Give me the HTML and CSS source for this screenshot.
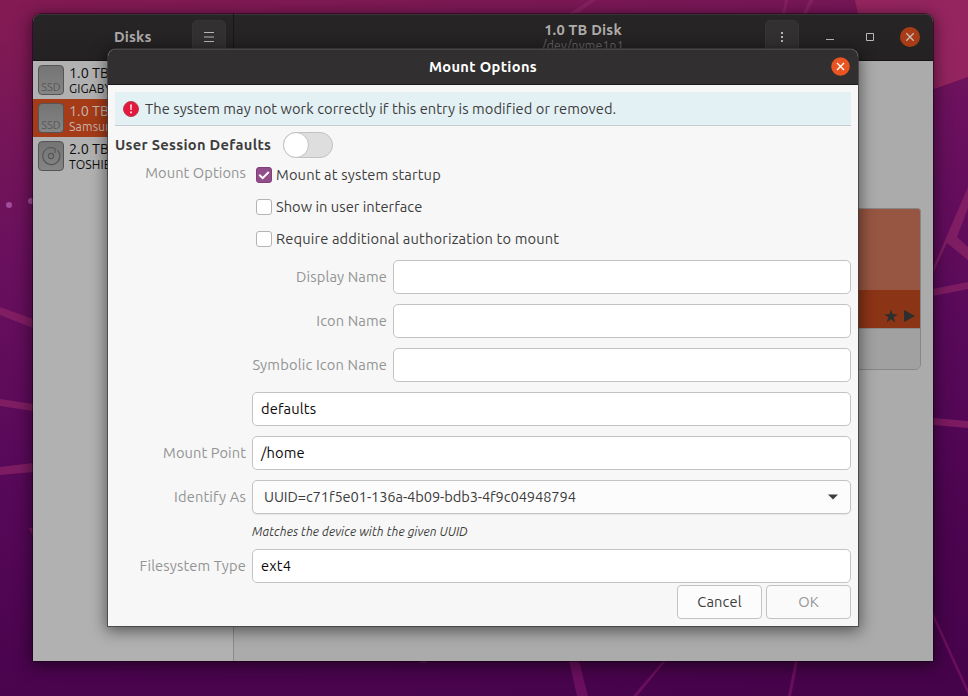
FILE: index.html
```html
<!DOCTYPE html>
<html lang="en">
<head>
<meta charset="utf-8">
<title>Mount Options</title>
<link rel="stylesheet" href="styles.css">
</head>
<body>
<svg class="wallpaper" width="968" height="696" viewBox="0 0 968 696" aria-hidden="true">
  <path d="M855 0L858 14L934 89L968 77V0Z" fill="#a02b62" opacity=".75"/>
  <g fill="#8c2467" opacity=".72">
    <path d="M568 14H577L596 0H590Z M782 14L785 0H788L785 14Z M803 14L809 0H814L806 14Z"/>
    <path d="M0 307L33 319V328L0 315Z M0 399L33 404V411L0 406Z M0 467L33 463V472L0 475Z M29 528H33V536Z"/>
    <path d="M968 187L933 268V273L947 243L968 260V247L957 237L968 208Z M933 289L968 282V289L933 296Z M933 418L968 421V428L933 425Z"/>
  </g>
  <g fill="#6a0f5e">
    <path d="M933 612L968 689V695L933 618Z M663 661H666L637 696H633Z M795 661H798L791 696H788Z M569 661H579L588 696H577Z M419 661H427V663H421Z"/>
  </g>
  <g fill="#a14d9a"><circle cx="9" cy="205" r="3"/><circle cx="31" cy="201" r="3"/></g>
</svg>

<main class="window">
  <header class="topbar">
    <div class="topbar-side">
      <span class="app-name">Disks</span>
      <span class="tool"><svg width="12" height="12" viewBox="0 0 12 12"><path d="M1 1.5H11M1 6H11M1 10.5H11" stroke="#b8b7b5"/></svg></span>
    </div>
    <div class="topbar-main">
      <div class="drive-title"><b>1.0 TB Disk</b><span>/dev/nvme1n1</span></div>
      <span class="tool"><svg width="12" height="12" viewBox="0 0 12 12"><path d="M5 1h2v2H5zM5 5h2v2H5zM5 9h2v2H5z" fill="#b8b7b5"/></svg></span>
      <div class="controls">
        <svg width="8" height="8" viewBox="0 0 8 8"><path d="M0 6.5H8" stroke="#b8b7b5"/></svg>
        <svg width="8" height="8" viewBox="0 0 8 8"><path d="M.5 .5H7.5V7.5H.5Z" fill="none" stroke="#b8b7b5"/></svg>
        <svg width="20" height="20" viewBox="0 0 20 20"><circle cx="10" cy="10" r="10" fill="#a73c17"/><path d="M6.3 6.3L13.7 13.7M13.7 6.3L6.3 13.7" stroke="#c8bfb9" stroke-width="1.3"/></svg>
      </div>
    </div>
  </header>
  <div class="content">
    <ul class="drives">
      <li class="drive"><span class="drive-icon">SSD</span><p><b>1.0 TB</b><span>GIGABY</span></p></li>
      <li class="drive active"><span class="drive-icon">SSD</span><p><b>1.0 TB</b><span>Samsun</span></p></li>
      <li class="drive"><span class="drive-icon"><svg width="20" height="20" viewBox="0 0 20 20" fill="none" stroke="#575757" stroke-width="1.2"><path d="M16.5 4.2A8.5 8.5 0 1 1 10 1.5A8 8 0 0 1 14 2.7V7"/><circle cx="10" cy="10" r="2.6"/></svg></span><p><b>2.0 TB</b><span>TOSHIB</span></p></li>
    </ul>
    <section class="volumes">
      <div class="volume-map">
        <div class="volume-free"></div>
        <div class="volume-used">
          <svg width="14" height="14" viewBox="0 0 14 14"><path d="M7 .3L8.7 5.2H13.8L9.7 8.3L11.2 13.4L7 10.3L2.8 13.4L4.3 8.3L.2 5.2H5.3Z" fill="#2e2e2e"/></svg>
          <svg width="11" height="12" viewBox="0 0 11 12"><path d="M0 0L11 6L0 12Z" fill="#2e2e2e"/></svg>
        </div>
        <div class="volume-tools"></div>
      </div>
    </section>
  </div>
</main>

<div class="dialog" role="dialog">
  <header class="dialog-head"><h1>Mount Options</h1>
    <svg class="dialog-close" width="19" height="19" viewBox="0 0 19 19"><circle cx="9.5" cy="9.5" r="9.3" fill="#e95420"/><path d="M6 6L13 13M13 6L6 13" stroke="#fff" stroke-width="1.4"/></svg>
  </header>
  <div class="dialog-body">
    <div class="notice">
      <svg width="16" height="16" viewBox="0 0 16 16"><circle cx="8" cy="8" r="7.5" fill="#e4173c" stroke="#b93c50"/><path d="M7 3.5H9L8.7 9H7.3ZM7 10.4H9V12.2H7Z" fill="#f9d5da"/></svg>
      <span class="t-notice">The system may not work correctly if this entry is modified or removed.</span>
    </div>
    <div class="session"><b class="t-session">User Session Defaults</b><span class="switch"><span class="knob"></span></span></div>
    <div class="form">
      <span class="label top">Mount Options</span>
      <div class="checks">
        <label class="check"><span class="box on"><svg width="16" height="16" viewBox="0 0 16 16"><path d="M3.2 7.7L6.7 11.2L12.8 5" fill="none" stroke="#fff" stroke-width="2"/></svg></span><span class="t-check">Mount at system startup</span></label>
        <label class="check"><span class="box"></span><span class="t-show">Show in user interface</span></label>
        <label class="check"><span class="box"></span><span class="t-check">Require additional authorization to mount</span></label>
      </div>
      <div class="names">
        <span class="label">Display Name</span><div class="entry"></div>
        <span class="label">Icon Name</span><div class="entry"></div>
        <span class="label t-symbolic">Symbolic Icon Name</span><div class="entry"></div>
      </div>
      <div class="entry wide"><span>defaults</span></div>
      <span class="label t-point">Mount Point</span><div class="entry"><span>/home</span></div>
      <span class="label">Identify As</span>
      <div class="entry combo"><span class="t-uuid">UUID=c71f5e01-136a-4b09-bdb3-4f9c04948794</span><svg width="10" height="6" viewBox="0 0 10 6"><path d="M0 .5H10L5 5.5Z" fill="#3d3d3d"/></svg></div>
      <i class="hint">Matches the device with the given UUID</i>
      <span class="label">Filesystem Type</span><div class="entry"><span>ext4</span></div>
    </div>
    <footer class="actions"><span class="button">Cancel</span><span class="button off">OK</span></footer>
  </div>
</div>
</body>
</html>
```
FILE: styles.css
```css
* { box-sizing: border-box; margin: 0; padding: 0; }
body {
  width: 968px; height: 696px; overflow: hidden; position: relative;
  padding: 14px 35px 35px 33px;
  font: 14.667px/20px "Ubuntu", "Noto Sans", sans-serif; letter-spacing: .13px; color: #3d3d3d;
  background: linear-gradient(172deg, #851a54 0, #7d1955 8%, #6a105d 30%, #59095a 55%, #4b044f 80%, #450349 100%);
}
svg { display: block; flex: none; }
.wallpaper { position: absolute; left: 0; top: 0; }

.window {
  position: relative; width: 900px; height: 647px; overflow: hidden;
  border-radius: 8px 8px 0 0; display: flex; flex-direction: column;
  background: #ababab;
  box-shadow: 0 0 0 1px rgba(20,0,20,.5), 0 3px 16px 2px rgba(0,0,0,.5);
}
.topbar { height: 47px; flex: none; display: flex; background: linear-gradient(#272525, #232122); border-bottom: 1px solid #151414; box-shadow: inset 0 1px #363434; color: #aeacaa; }
.topbar-side { width: 201px; border-right: 1px solid #171616; display: flex; align-items: center; justify-content: flex-end; padding-right: 7px; }
.app-name { width: 38px; margin-right: 40px; font-weight: 700; white-space: nowrap; }
.tool { width: 34px; height: 34px; margin-top: -1px; border-radius: 5px; background: #323031; border: 1px solid #363435; display: flex; align-items: center; justify-content: center; }
.topbar-main { flex: 1; display: flex; align-items: center; }
.drive-title { width: 100px; margin: 1px 183px 0 299px; display: flex; flex-direction: column; align-items: center; line-height: 16px; white-space: nowrap; letter-spacing: .2px; }
.drive-title span { font-size: 12.22px; letter-spacing: .2px; color: #666463; }
.topbar-main .tool { margin-left: -51px; }
.controls { display: flex; align-items: center; gap: 32px; margin-left: 27px; }
.controls svg:last-child { margin-left: -6px; }

.content { flex: 1; display: flex; }
.drives { width: 201px; list-style: none; background: #b1b1b1; border-right: 1px solid #8b8b8b; }
.drive { height: 38px; padding: 0 5px; display: flex; align-items: center; gap: 5px; color: #0c0c0c; white-space: nowrap; }
.drive.active { background: #a53b17; color: #c5b6af; }
.drive-icon { width: 26px; height: 30px; border: 1px solid #555; border-radius: 4px; background: linear-gradient(#747474, #858585); color: #575757; font-size: 11px; line-height: 12px; letter-spacing: 0; display: flex; justify-content: center; align-items: flex-end; padding-bottom: 1px; }
.drive-icon svg { margin-bottom: 3px; }
.drive p { display: flex; flex-direction: column; padding-top: 2px; }
.drive b { font-weight: 400; font-size: 14.4px; line-height: 15px; letter-spacing: 0; }
.drive p span { font-size: 12.22px; line-height: 16px; }
.volumes { flex: 1; padding: 147px 12px 0; }
.volume-map { height: 162px; border: 1px solid #868686; border-radius: 3px 3px 6px 6px; overflow: hidden; display: flex; flex-direction: column; }
.volume-free { height: 81px; background: #975641; }
.volume-used { height: 38px; background: #8c3416; display: flex; justify-content: flex-end; align-items: center; gap: 6px; padding: 14px 5px 0 0; }
.volume-tools { flex: 1; background: #a1a1a1; border-top: 1px solid #8a8a8a; }

.dialog {
  position: absolute; left: 108px; top: 49px; width: 750px; height: 577px;
  border-radius: 8px 8px 0 0; background: #f7f7f7; overflow: hidden;
  box-shadow: 0 0 0 1px rgba(60,60,60,.75), 0 3px 15px 2px rgba(0,0,0,.5);
  display: flex; flex-direction: column;
}
.dialog-head { height: 36px; flex: none; display: grid; grid-template-columns: 1fr auto 1fr; align-items: center; background: #312f30; border-bottom: 1px solid #1c1b1b; box-shadow: inset 0 1px #474545; }
.dialog-head h1 { grid-column: 2; font-size: 14.667px; line-height: 20px; letter-spacing: .33px; color: #fff; white-space: nowrap; }
.dialog-close { justify-self: end; margin: -1px 8.5px 0 0; }
.dialog-body { padding: 7px; flex: 1; display: flex; flex-direction: column; white-space: nowrap; }
.notice { height: 34px; flex: none; background: #e3f1f5; border-bottom: 1px solid #c5cdd0; display: flex; align-items: center; padding-left: 8px; gap: 6px; }
.t-notice { letter-spacing: .07px; }
.session { height: 38px; flex: none; display: flex; align-items: center; }
.t-session { width: 168px; letter-spacing: .3px; }
.switch { width: 50px; height: 26px; border-radius: 13px; border: 1px solid #c2c2c2; background: #dedede; display: flex; }
.knob { width: 26px; height: 26px; margin: -1px; border: 1px solid #c2c2c2; border-radius: 50%; background: #fff; }
.form { display: grid; grid-template-columns: 131px 599px; column-gap: 6px; row-gap: 10px; align-items: center; margin-top: -5px; }
.label { color: #929494; justify-self: end; }
.label.top { align-self: start; margin-top: 4px; letter-spacing: .08px; }
.t-symbolic { letter-spacing: .17px; }
.t-point { letter-spacing: .08px; }
.checks { padding-left: 4px; display: flex; flex-direction: column; }
.check { height: 32px; display: flex; align-items: center; gap: 4px; }
.t-check { letter-spacing: .155px; }
.t-show { letter-spacing: .03px; }
.box { width: 16px; height: 16px; border: 1px solid #b4b4b4; border-radius: 3px; background: #fff; }
.box.on { background: #924d8b; border-color: #824078; }
.box.on svg { margin: -1px; }
.names { grid-column: 2; display: grid; grid-template-columns: 135px 458px; column-gap: 6px; row-gap: 10px; align-items: center; margin-top: -5px; }
.entry { height: 34px; border: 1px solid #c3c3c3; border-radius: 5px; background: #fff; padding: 0 8px; color: #0a0a0a; display: flex; align-items: center; }
.wide, .hint { grid-column: 2; }
.combo { background: #fcfcfc; color: #3d3d3d; padding: 0 12px 0 11px; justify-content: space-between; box-shadow: 0 1px 1px #e6e6e6; }
.t-uuid { letter-spacing: -.1px; }
.hint { font-size: 12.22px; line-height: 16px; letter-spacing: .1px; margin: 0 0 -1px; }
.actions { display: flex; justify-content: flex-end; gap: 4px; margin-top: 2px; }
.button { width: 85px; height: 34px; border: 1px solid #c3c3c3; border-radius: 4px; background: #fcfcfc; display: flex; align-items: center; justify-content: center; }
.button.off { color: #969696; background: #fafafa; }
```
